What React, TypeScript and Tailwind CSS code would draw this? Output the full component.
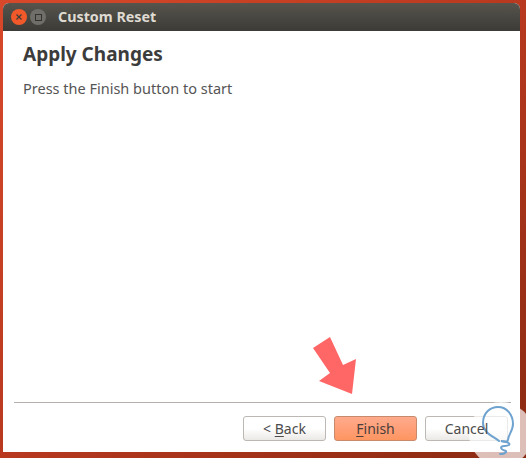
const WizardButton = ({
  label,
  primary,
}: {
  label: React.ReactNode;
  primary?: boolean;
}) => {
  const look = primary
    ? "border-[#c98a6c] bg-gradient-to-b from-[#ffab8c] via-[#ff9f78] to-[#fd9560] text-[#4a3f3a]"
    : "border-[#bdb8b4] bg-gradient-to-b from-white via-white to-[#ebe9e6] text-[#4c4c4c]";

  return (
    <button
      className={`h-[25px] w-[83px] whitespace-pre rounded-[3px] border text-center text-[14px] ${look}`}
    >
      {label}
    </button>
  );
};

const Watermark = () => (
  <div className="absolute left-[469px] top-[402px] h-[64px] w-[64px] rounded-full bg-white/70">
    <svg width="64" height="64" viewBox="0 0 64 64" fill="none">
      <path
        d="M30 39 C24 34 14 31 14 21 C14 11 21 5 29 5 C38 5 44 13 44 22 C44 29 39 33 39 38 C38 41 35 40 32 39 C36 39 42 41 40 43 C37 45 32 43 32 46 C33 49 38 48 37 50 C36 52 33 52 31 52"
        stroke="#6fa3cf"
        strokeWidth="2"
        strokeLinecap="round"
      />
    </svg>
  </div>
);

const App = () => {
  return (
    <div
      className="relative flex h-[458px] w-[526px] flex-col overflow-hidden bg-gradient-to-br from-[#d8482a] via-[#b8391f] to-[#8a2a12] pb-[6px] pl-[3px] pr-[6px] pt-[3px]"
      style={{ fontFamily: '"Noto Sans", "Open Sans", sans-serif' }}
    >
      <div className="flex h-full flex-col overflow-hidden rounded-t-[6px] bg-white">
        <div className="flex h-[28px] shrink-0 items-center gap-[3px] bg-gradient-to-b from-[#56544c] to-[#3c3b37] pl-[8px]">
          <div className="flex h-[16px] w-[16px] items-center justify-center rounded-full bg-[#f1592a]">
            <svg width="8" height="8" viewBox="0 0 8 8">
              <path d="M1.5 1.5 L6.5 6.5 M6.5 1.5 L1.5 6.5" stroke="#3c3b37" strokeWidth="1.2" />
            </svg>
          </div>
          <div className="flex h-[16px] w-[16px] items-center justify-center rounded-full bg-[#6f6e69]">
            <div className="h-[7px] w-[7px] border border-[#33322f]" />
          </div>
          <span className="ml-[9px] text-[14.3px] font-bold text-[#dfdbd2]">Custom Reset</span>
        </div>

        <div className="flex flex-1 flex-col pl-[20px] pt-[10px]">
          <h1 className="text-[19px] font-bold leading-[26px] text-[#3c3c3c]">Apply Changes</h1>
          <p className="mt-[11px] text-[14.5px] leading-[20px] text-[#555555]">
            Press the Finish button to start
          </p>
        </div>

        <div className="ml-[11px] mr-[9px] border-t border-[#b5b0ad]" />
        <div className="flex h-[49px] shrink-0 items-start justify-end gap-[8px] pr-[12px] pt-[13px]">
          <WizardButton
            label={
              <>
                {"< "}
                <span className="underline underline-offset-2">B</span>ack
              </>
            }
          />
          <WizardButton
            primary
            label={
              <>
                <span className="underline underline-offset-2">F</span>inish
              </>
            }
          />
          <WizardButton label={<span className="relative z-10">Cancel</span>} />
        </div>
      </div>

      <svg className="absolute left-[300px] top-[330px]" width="70" height="70" viewBox="0 0 70 70">
        <polygon points="13,18 30,7 43,35 56,29 52,64 19,51 30,43" fill="#ff6666" />
      </svg>
      <Watermark />
    </div>
  );
};

export default App;
